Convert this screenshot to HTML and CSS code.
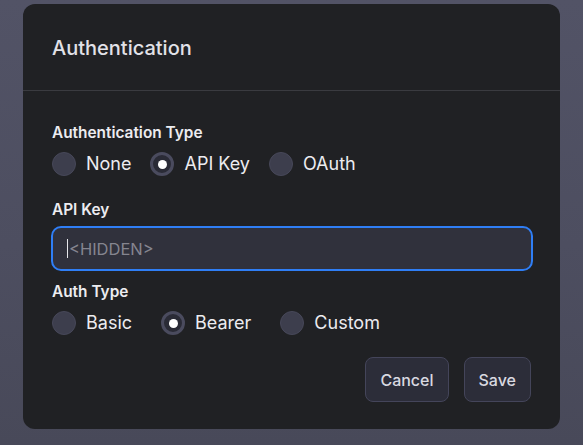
FILE: index.html
```html
<!DOCTYPE html>
<html lang="en">
<head>
<meta charset="utf-8">
<title>Authentication</title>
<link rel="stylesheet" href="styles.css">
</head>
<body>
<div class="backdrop">
  <div class="modal">
    <div class="modal-header">
      <h2 class="modal-title">Authentication</h2>
    </div>
    <div class="modal-body">
      <div class="field field-first">
        <div class="field-label">Authentication Type</div>
        <div class="radio-row radio-row-tight">
          <label class="radio"><span class="radio-dot"></span><span class="radio-text">None</span></label>
          <label class="radio"><span class="radio-dot checked"></span><span class="radio-text">API Key</span></label>
          <label class="radio"><span class="radio-dot"></span><span class="radio-text">OAuth</span></label>
        </div>
      </div>
      <div class="field field-key">
        <div class="field-label">API Key</div>
        <div class="input"><span class="caret"></span><span class="placeholder">&lt;HIDDEN&gt;</span></div>
      </div>
      <div class="field field-auth">
        <div class="field-label">Auth Type</div>
        <div class="radio-row radio-row-wide">
          <label class="radio"><span class="radio-dot"></span><span class="radio-text">Basic</span></label>
          <label class="radio"><span class="radio-dot checked"></span><span class="radio-text">Bearer</span></label>
          <label class="radio"><span class="radio-dot"></span><span class="radio-text">Custom</span></label>
        </div>
      </div>
      <div class="actions">
        <button class="btn">Cancel</button>
        <button class="btn">Save</button>
      </div>
    </div>
  </div>
</div>
</body>
</html>
```
FILE: styles.css
```css
* { box-sizing: border-box; }
html, body {
  margin: 0;
  padding: 0;
  width: 583px;
  height: 445px;
  overflow: hidden;
}
body {
  font-family: Inter, "Noto Sans", sans-serif;
  background: #4d4e60;
}
.backdrop {
  width: 583px;
  height: 445px;
  padding: 4px 23px 16px 23px;
  background: linear-gradient(180deg, #525366 0%, #4d4e60 55%, #484959 100%);
}
.modal {
  width: 537px;
  height: 425px;
  background: #202124;
  border-radius: 12px;
  display: flex;
  flex-direction: column;
}
.modal-header {
  height: 87px;
  border-bottom: 1px solid #3a3b40;
  padding: 30px 0 0 29px;
}
.modal-title {
  margin: 0;
  font-size: 20px;
  font-weight: 500;
  color: #e2e2e8;
  line-height: 28px;
}
.modal-body {
  padding: 32px 28px 0 29px;
  display: flex;
  flex-direction: column;
}
.field-label {
  font-size: 15.4px;
  font-weight: 600;
  color: #ececf0;
  line-height: 20px;
}
.radio-row {
  display: flex;
  align-items: center;
  margin-top: 8px;
  height: 26px;
}
.radio-row-tight { gap: 19px; }
.radio-row-wide { gap: 29px; }
.radio {
  display: flex;
  align-items: center;
  gap: 10px;
}
.radio-dot {
  width: 24px;
  height: 24px;
  border-radius: 50%;
  background: #3d3e4d;
  border: 1px solid #474859;
  display: flex;
  align-items: center;
  justify-content: center;
}
.radio-dot.checked {
  background: #2a2b36;
  border: 3px solid #4a4b5e;
}
.radio-dot.checked::after {
  content: "";
  width: 9px;
  height: 9px;
  border-radius: 50%;
  background: #ffffff;
}
.radio-text {
  font-size: 18px;
  color: #ececf0;
  line-height: 24px;
}
.field-key { margin-top: 23px; }
.field-key .field-label { margin-bottom: 6px; }
.field-auth { margin-top: 11px; }
.input {
  width: 482px;
  height: 45px;
  margin-left: -1px;
  border: 2px solid #2f7ef5;
  border-radius: 10px;
  background: #30313c;
  display: flex;
  align-items: center;
  padding-left: 14px;
}
.caret {
  width: 1px;
  height: 19px;
  background: #e6e6ea;
  margin-right: 1px;
}
.placeholder {
  font-size: 16.5px;
  color: #85858f;
}
.actions {
  display: flex;
  justify-content: flex-end;
  gap: 15px;
  margin-top: 21px;
  margin-right: 1px;
}
.btn {
  height: 45px;
  padding: 0 14px;
  background: #2c2d39;
  border: 1px solid #44455a;
  border-radius: 8px;
  color: #d9d9e0;
  font-family: Inter, "Noto Sans", sans-serif;
  font-size: 16px;
  font-weight: 500;
}
```
